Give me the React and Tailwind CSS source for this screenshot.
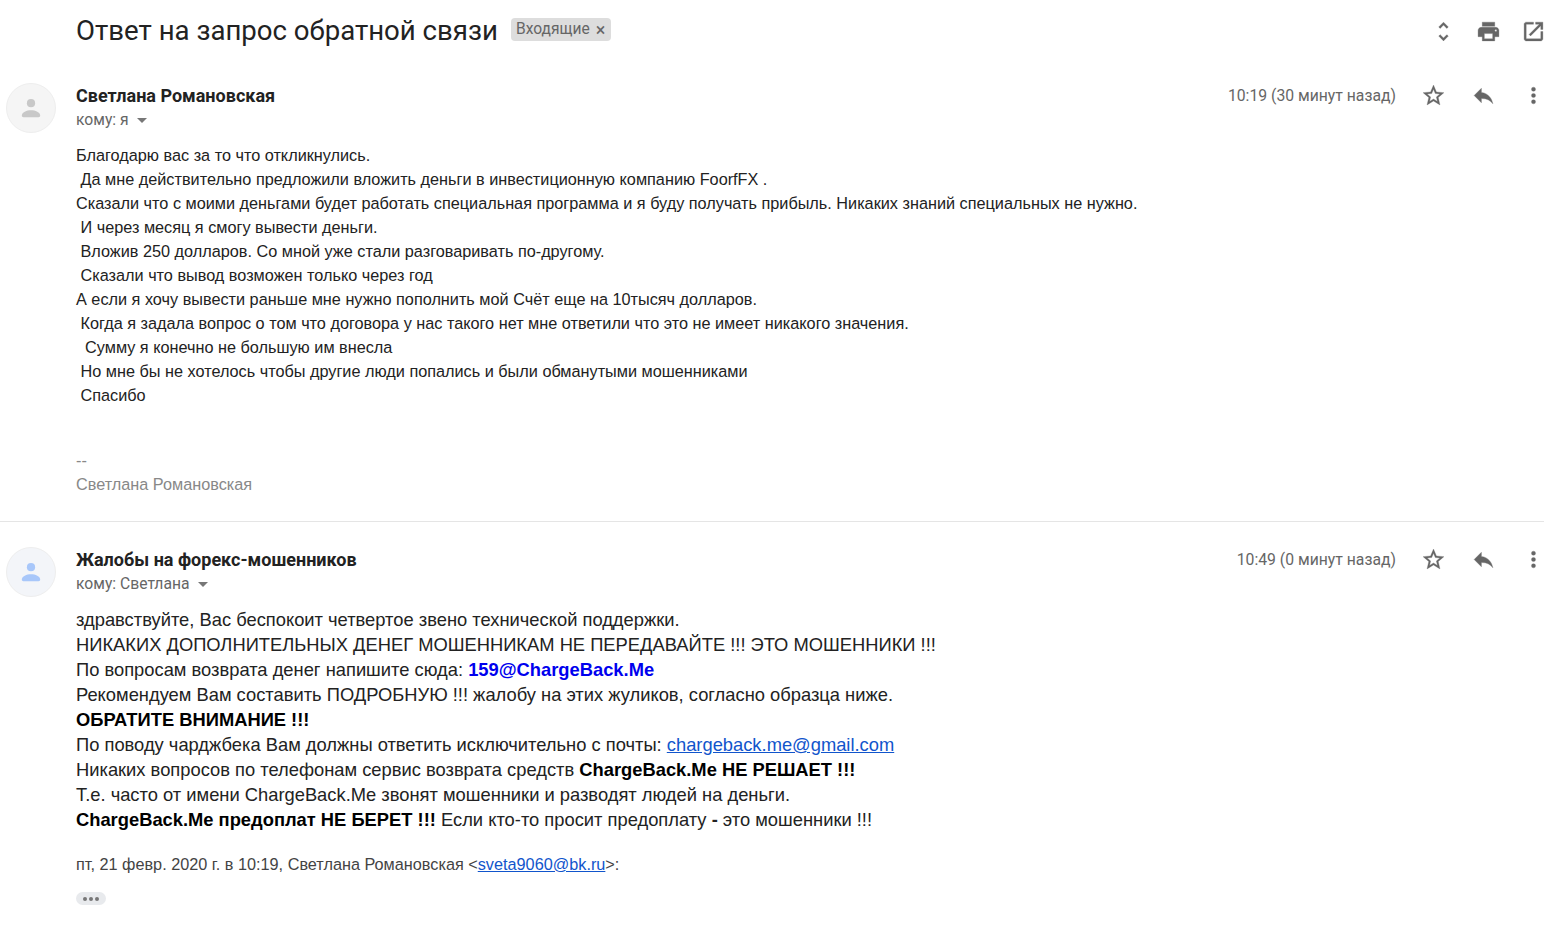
const ICON_PATHS = {
    unfold: 'M12 5.83L15.17 9l1.41-1.41L12 3 7.41 7.59 8.83 9 12 5.83zm0 12.34L8.83 15l-1.41 1.41L12 21l4.59-4.59L15.17 15 12 18.17z',
    print: 'M19 8H5c-1.66 0-3 1.34-3 3v6h4v4h12v-4h4v-6c0-1.66-1.34-3-3-3zm-3 11H8v-5h8v5zm3-7c-.55 0-1-.45-1-1s.45-1 1-1 1 .45 1 1-.45 1-1 1zm-1-9H6v4h12V3z',
    open: 'M19 19H5V5h7V3H5c-1.11 0-2 .9-2 2v14c0 1.1.89 2 2 2h14c1.1 0 2-.9 2-2v-7h-2v7zM14 3v2h3.59l-9.83 9.83 1.41 1.41L19 6.41V10h2V3h-7z',
    star: 'M22 9.24l-7.19-.62L12 2 9.19 8.63 2 9.24l5.46 4.73L5.82 21 12 17.27 18.18 21l-1.63-7.03L22 9.24zM12 15.4l-3.76 2.27 1-4.28-3.32-2.88 4.38-.38L12 6.1l1.71 4.04 4.38.38-3.32 2.88 1 4.28L12 15.4z',
    reply: 'M10 9V5l-7 7 7 7v-4.1c5 0 8.5 1.6 11 5.1-1-5-4-10-11-11z',
    more: 'M12 8a2 2 0 1 0 0-4 2 2 0 0 0 0 4zm0 2a2 2 0 1 0 0 4 2 2 0 0 0 0-4zm0 6a2 2 0 1 0 0 4 2 2 0 0 0 0-4z',
};

const Icon = ({ name }) => (
    <svg className="w-[25px] h-[25px] fill-[#666666] stroke-[#666666] stroke-[0.3] shrink-0" viewBox="0 0 24 24">
        <path d={ICON_PATHS[name]} />
    </svg>
);

const Avatar = ({ tint, bg }) => (
    <div className={`flex justify-center items-center ml-1.5 w-[50px] h-[50px] rounded-full border border-[#eeeeee] shrink-0 ${bg}`}>
        <svg className="w-[26px] h-[26px]" viewBox="0 0 24 24" fill={tint}>
            <circle cx="12" cy="7.500" r="3.800" />
            <path d="M3.500 19c0-3.200 4.500-5 8.500-5s8.500 1.800 8.500 5c0 1-.6 1.500-1.500 1.500H5c-.9 0-1.500-.5-1.500-1.500z" />
        </svg>
    </div>
);

const MessageHeader = ({ sender, to, time, tint, bg }) => (
    <div className="flex items-start">
        <Avatar tint={tint} bg={bg} />
        <div className="flex-1 ml-5">
            <div className="font-['Roboto',sans-serif] text-[18px] leading-6 font-bold text-[#222222] mt-px">{sender}</div>
            <div className="flex items-center font-['Roboto',sans-serif] text-[15.7px] leading-5 text-[#666666] mt-[2px]">
                {to}
                <span className="ml-2 w-0 h-0 border-x-[5px] border-x-transparent border-t-[5px] border-t-[#777777]" />
            </div>
        </div>
        <div className="flex items-center h-6 mr-[18px]">
            <span className="font-['Roboto',sans-serif] text-[15.75px] text-[#666666] mr-[25px] mt-px">{time}</span>
            <div className="flex gap-[25px]">
                <Icon name="star" />
                <Icon name="reply" />
                <Icon name="more" />
            </div>
        </div>
    </div>
);

const firstBody = [
    'Благодарю вас за то что откликнулись.',
    ' Да мне действительно предложили вложить деньги в инвестиционную компанию FoorfFX .',
    'Сказали что с моими деньгами будет работать специальная программа и я буду получать прибыль. Никаких знаний специальных не нужно.',
    ' И через месяц я смогу вывести деньги.',
    ' Вложив 250 долларов. Со мной уже стали разговаривать по-другому.',
    ' Сказали что вывод возможен только через год',
    'А если я хочу вывести раньше мне нужно пополнить мой Счёт еще на 10тысяч долларов.',
    ' Когда я задала вопрос о том что договора у нас такого нет мне ответили что это не имеет никакого значения.',
    '  Сумму я конечно не большую им внесла',
    ' Но мне бы не хотелось чтобы другие люди попались и были обманутыми мошенниками',
    ' Спасибо',
];

export default function App() {
    return (
        <div className="min-h-screen bg-white overflow-hidden">
            {/* 제목 */}
            <div className="flex items-center h-[62px] pl-[76px] pr-[18px]">
                <h1 className="font-['Roboto',sans-serif] text-[27.6px] font-normal text-[#222222]">Ответ на запрос обратной связи</h1>
                <span className="flex items-center mb-[3px] ml-[13px] px-[5px] w-[100px] h-[23px] rounded bg-[#dddddd] font-['Roboto',sans-serif] text-[15.6px] text-[#666666]">
                    Входящие
                    <span className="ml-1.5 text-[18px] leading-none text-[#666666]">×</span>
                </span>
                <div className="flex gap-5 ml-auto">
                    <Icon name="unfold" />
                    <Icon name="print" />
                    <Icon name="open" />
                </div>
            </div>

            {/* 첫 번째 메시지 */}
            <div className="pt-[21px] h-[459px]">
                <MessageHeader sender="Светлана Романовская" to="кому: я" time="10:19 (30 минут назад)" tint="#c8c8c8" bg="bg-[#f5f5f5]" />
                <div className="pl-[76px] mt-2.5 font-['Liberation_Sans',sans-serif] text-[16.25px] leading-6 text-[#222222] whitespace-pre">
                    {firstBody.map((line) => (
                        <div key={line}>{line}</div>
                    ))}
                    <div className="mt-[42px] leading-[23px] text-[#888888]">--</div>
                    <div className="text-[#888888]">Светлана Романовская</div>
                </div>
            </div>
            <div className="mr-5 h-px bg-[#e5e5e5]" />

            {/* 두 번째 메시지 */}
            <div className="pt-[25px]">
                <MessageHeader sender="Жалобы на форекс-мошенников" to="кому: Светлана" time="10:49 (0 минут назад)" tint="#a8c7fa" bg="bg-[#f3f5f9]" />
                <div className="pl-[76px] mt-2.5 font-['Liberation_Sans',sans-serif] text-[18.34px] leading-[25px] text-[#222222] whitespace-pre">
                    <div>здравствуйте, Вас беспокоит четвертое звено технической поддержки.</div>
                    <div>НИКАКИХ ДОПОЛНИТЕЛЬНЫХ ДЕНЕГ МОШЕННИКАМ НЕ ПЕРЕДАВАЙТЕ !!! ЭТО МОШЕННИКИ !!!</div>
                    <div>По вопросам возврата денег напишите сюда: <b className="text-[#0000ee]">159@ChargeBack.Me</b></div>
                    <div>Рекомендуем Вам составить ПОДРОБНУЮ !!! жалобу на этих жуликов, согласно образца ниже.</div>
                    <div className="font-bold text-black">ОБРАТИТЕ ВНИМАНИЕ !!!</div>
                    <div>По поводу чарджбека Вам должны ответить исключительно с почты: <a className="underline text-[#1155cc]" href="#">chargeback.me@gmail.com</a></div>
                    <div>Никаких вопросов по телефонам сервис возврата средств <b className="text-black">ChargeBack.Me НЕ РЕШАЕТ !!!</b></div>
                    <div>Т.е. часто от имени ChargeBack.Me звонят мошенники и разводят людей на деньги.</div>
                    <div><b className="text-black">ChargeBack.Me предоплат НЕ БЕРЕТ !!!</b> Если кто-то просит предоплату <b>-</b> это мошенники !!!</div>
                    <div className="mt-[20px] text-[16.25px] leading-6 text-[#444444]">
                        пт, 21 февр. 2020 г. в 10:19, Светлана Романовская &lt;<a className="underline text-[#1155cc]" href="#">sveta9060@bk.ru</a>&gt;:
                    </div>
                    <div className="flex justify-center items-center gap-[2px] mt-4 w-[30px] h-[13px] rounded-full bg-[#e8eaed]">
                        <span className="w-1 h-1 rounded-full bg-[#777777]" />
                        <span className="w-1 h-1 rounded-full bg-[#777777]" />
                        <span className="w-1 h-1 rounded-full bg-[#777777]" />
                    </div>
                </div>
            </div>
        </div>
    );
}
